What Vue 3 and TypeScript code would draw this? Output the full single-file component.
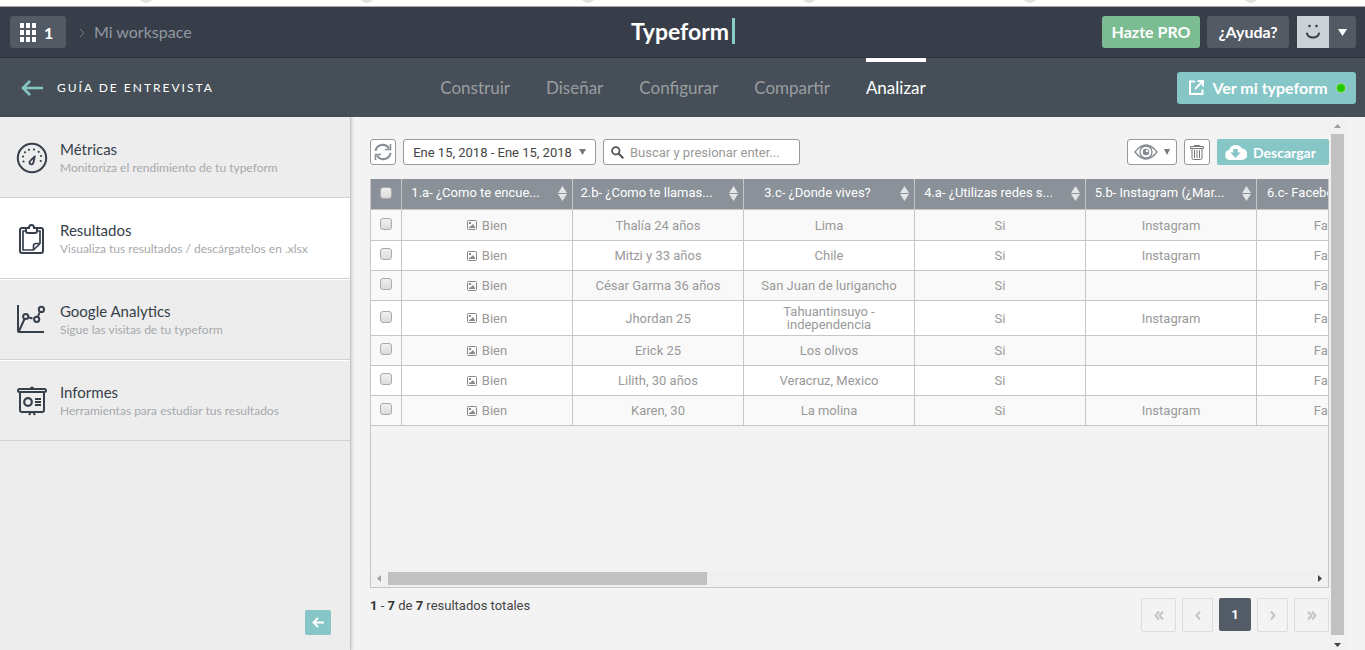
<script setup lang="ts">
import { ref } from 'vue'

interface Tab { label: string; active?: boolean }
interface SideItem { icon: string; title: string; text: string; active?: boolean }
interface Row { name: string; place: string; social: string; network: string; facebook: string }

const tabs: Tab[] = [
  { label: 'Construir' },
  { label: 'Diseñar' },
  { label: 'Configurar' },
  { label: 'Compartir' },
  { label: 'Analizar', active: true },
]

const sideItems: SideItem[] = [
  { icon: 'gauge', title: 'Métricas', text: 'Monitoriza el rendimiento de tu typeform' },
  { icon: 'clipboard', title: 'Resultados', text: 'Visualiza tus resultados / descárgatelos en .xlsx', active: true },
  { icon: 'chart', title: 'Google Analytics', text: 'Sigue las visitas de tu typeform' },
  { icon: 'board', title: 'Informes', text: 'Herramientas para estudiar tus resultados' },
]

const columns: string[] = [
  '1.a- ¿Como te encue...',
  '2.b- ¿Como te llamas...',
  '3.c- ¿Donde vives?',
  '4.a- ¿Utilizas redes s...',
  '5.b- Instagram (¿Mar...',
  '6.c- Facebook (¿Mar...',
]

const rows: Row[] = [
  { name: 'Thalía 24 años', place: 'Lima', social: 'Si', network: 'Instagram', facebook: 'Facebook' },
  { name: 'Mitzi y 33 años', place: 'Chile', social: 'Si', network: 'Instagram', facebook: 'Facebook' },
  { name: 'César Garma 36 años', place: 'San Juan de lurigancho', social: 'Si', network: '', facebook: 'Facebook' },
  { name: 'Jhordan 25', place: 'Tahuantinsuyo - independencia', social: 'Si', network: 'Instagram', facebook: 'Facebook' },
  { name: 'Erick 25', place: 'Los olivos', social: 'Si', network: '', facebook: 'Facebook' },
  { name: 'Lilith, 30 años', place: 'Veracruz, Mexico', social: 'Si', network: '', facebook: 'Facebook' },
  { name: 'Karen, 30', place: 'La molina', social: 'Si', network: 'Instagram', facebook: 'Facebook' },
]

const query = ref('')
</script>

<template>
  <div class="page">
    <div class="strip" aria-hidden="true">
      <i v-for="n in 6" :key="n"></i>
    </div>

    <header class="topbar">
      <div class="side left">
        <button class="apps" aria-label="Workspaces">
          <svg width="16" height="19" viewBox="0 0 16 19" fill="#fff">
            <path d="M0 0h4v5H0zM6 0h4v5H6zM12 0h4v5h-4zM0 7h4v5H0zM6 7h4v5H6zM12 7h4v5h-4zM0 14h4v5H0zM6 14h4v5H6zM12 14h4v5h-4z" />
          </svg>
          <b>1</b>
        </button>
        <svg class="crumb" width="6" height="10" viewBox="0 0 6 10" fill="none" stroke="#737b85"><path d="M.7.7 5 5 .7 9.3" /></svg>
        <a class="workspace" href="#">Mi workspace</a>
      </div>
      <a class="brand" href="#">Typeform<span class="cursor"></span></a>
      <div class="side right">
        <button class="btn pro">Hazte PRO</button>
        <button class="btn help">¿Ayuda?</button>
        <button class="user" aria-label="Cuenta">
          <span class="face">
            <svg width="16" height="16" viewBox="0 0 16 16">
              <circle cx="4.500" cy="2" r="1.300" fill="#383e49" /><circle cx="11.500" cy="2" r="1.300" fill="#383e49" />
              <path d="M2 9.500c1.500 5.300 10.500 5.300 12 0" fill="none" stroke="#383e49" stroke-width="2" stroke-linecap="round" />
            </svg>
          </span>
          <span class="more"><svg width="9" height="7" viewBox="0 0 9 7"><path d="M0 0h9L4.500 7z" fill="#fff" /></svg></span>
        </button>
      </div>
    </header>

    <div class="subbar">
      <div class="side left">
        <a class="back" href="#" aria-label="Volver">
          <svg width="22" height="16" viewBox="0 0 22 16" fill="none" stroke="#86c6c7" stroke-width="2.600"><path d="M22 8H2M9 1 2 8l7 7" /></svg>
        </a>
        <h1>GUÍA DE ENTREVISTA</h1>
      </div>
      <nav class="tabs">
        <a v-for="t in tabs" :key="t.label" href="#" :class="{ active: t.active }">{{ t.label }}</a>
      </nav>
      <div class="side right">
        <button class="btn view">
          <svg width="15" height="15" viewBox="0 0 15 15" fill="none" stroke="#fff" stroke-width="2"><path d="M6 1.500H1V14h12.500V9.500M8.500 1H14v5.500M14 1 6 9" /></svg>
          <span>Ver mi typeform</span>
          <i class="dot"></i>
        </button>
      </div>
    </div>

    <div class="body">
      <aside class="sidebar">
        <nav>
          <a v-for="s in sideItems" :key="s.title" href="#" class="item" :class="{ active: s.active }">
            <svg v-if="s.icon === 'gauge'" width="32" height="32" viewBox="0 0 32 32" fill="none" stroke="#363f4a">
              <circle cx="16" cy="16" r="14.200" stroke-width="2" />
              <path d="M18.800 14.500 17.300 21c-.5 2-3.800 1.700-3.900-.4-.1-1.700 2.700-3.400 5.400-6.100z" stroke-width="1.800" stroke-linejoin="round" />
              <g fill="#363f4a" stroke="none">
                <circle cx="7.500" cy="19.500" r="1.100" /><circle cx="7" cy="14.500" r="1.100" /><circle cx="9" cy="10.300" r="1.100" />
                <circle cx="13" cy="7.800" r="1.100" /><circle cx="18" cy="7.500" r="1.100" /><circle cx="22.700" cy="9.800" r="1.100" />
                <circle cx="25" cy="14" r="1.100" /><circle cx="24.700" cy="19" r="1.100" />
              </g>
            </svg>
            <svg v-else-if="s.icon === 'clipboard'" width="32" height="32" viewBox="0 0 32 32" fill="none" stroke="#363f4a" stroke-width="2">
              <path d="M9 5H6Q4 5 4 7v21q0 2 2 2h19q2 0 2-2V7q0-2-2-2h-3" />
              <path d="M9 8H7v19h10.500l6.500-6.500V8h-2M17.500 27v-4q0-2.500 2.500-2.500h4" stroke-width="1.700" />
              <path d="M10 5h3q0-3 2.500-3T18 5h3v3q0 2-2 2h-7q-2 0-2-2z" />
            </svg>
            <svg v-else-if="s.icon === 'chart'" width="32" height="32" viewBox="0 0 32 32" fill="none" stroke="#363f4a" stroke-width="2">
              <path d="M2 1v26q0 1 1 1h25M3 27l5.500-12M13 13.500l3.500 1M22 12.500l1.500-4" />
              <circle cx="9.700" cy="12.500" r="2.600" /><circle cx="20.700" cy="15.300" r="2.600" /><circle cx="25.400" cy="5.400" r="2.600" />
            </svg>
            <svg v-else width="32" height="32" viewBox="0 0 32 32" fill="none" stroke="#363f4a" stroke-width="2">
              <rect x="2" y="4" width="28" height="3" rx="1.500" />
              <path d="M4 8v17q0 2 2 2h20q2 0 2-2V8M13 30l2-3M19 30l-2-3M19 14h6M19 17h6M19 20h6" />
              <path d="M14 3.500q0-2 2-2t2 2z" fill="#363f4a" stroke="none" />
              <circle cx="12" cy="17" r="3.800" stroke-width="2.200" />
            </svg>
            <span class="copy"><strong>{{ s.title }}</strong><small>{{ s.text }}</small></span>
          </a>
        </nav>
        <button class="collapse" aria-label="Contraer">
          <svg width="12" height="11" viewBox="0 0 12 11" fill="none" stroke="#fff" stroke-width="2"><path d="M12 5.500H1.500M6 1 1.500 5.500 6 10" /></svg>
        </button>
      </aside>

      <main class="content">
        <div class="toolbar">
          <button class="tool square" aria-label="Actualizar">
            <svg width="18" height="18" viewBox="0 0 18 18" fill="none" stroke="#8a9098" stroke-width="2">
              <path d="M1.500 8C2.500 1.500 11.500-.5 15 5.500M16.500 10C15.500 16.500 6.500 18.500 3 12.500" />
              <path d="M16.500 1v5.500H11M1.500 17v-5.500H7" stroke-width="1.600" />
            </svg>
          </button>
          <button class="tool date"><span>Ene 15, 2018 - Ene 15, 2018</span>
            <svg width="7" height="6" viewBox="0 0 7 6"><path d="M0 0h7L3.500 6z" fill="#777" /></svg>
          </button>
          <label class="tool search">
            <svg width="13" height="13" viewBox="0 0 13 13" fill="none" stroke="#555"><circle cx="4.800" cy="4.800" r="3.700" stroke-width="1.800" /><path d="m7.800 7.800 4.500 4.500" stroke-width="2.200" /></svg>
            <input v-model="query" type="text" placeholder="Buscar y presionar enter..." aria-label="Buscar" />
          </label>
          <span class="spacer"></span>
          <button class="tool eye" aria-label="Columnas visibles">
            <svg width="24" height="16" viewBox="0 0 24 16" fill="none" stroke="#858b93" stroke-width="1.300">
              <path d="M1 8q11-14 22 0Q12 22 1 8z" /><circle cx="12" cy="8" r="6" /><circle cx="12" cy="8" r="3.200" fill="#858b93" stroke="none" /><circle cx="13" cy="7" r="1.200" fill="#fff" stroke="none" />
            </svg>
            <svg width="6" height="6" viewBox="0 0 6 6"><path d="M0 0h6L3 6z" fill="#777" /></svg>
          </button>
          <button class="tool square" aria-label="Eliminar">
            <svg width="14" height="16" viewBox="0 0 14 16" fill="none" stroke="#777"><path d="M4.500 2.500v-1h5v1M.5 2.500h13v2H.5zM2 4.500V14q0 1.500 1.500 1.500h7Q12 15.500 12 14V4.500M4.500 6v8M7 6v8M9.500 6v8" /></svg>
          </button>
          <button class="download">
            <svg width="22" height="16" viewBox="0 0 22 16"><path d="M5 16a5 5 0 0 1-.8-9.900A7 7 0 0 1 17 4.600 5.600 5.600 0 0 1 16.500 16z" fill="#fff" /><path d="M8.300 5h4.400v3.500h3L10.500 14 5.300 8.500h3z" fill="#86c6c7" /></svg>
            <span>Descargar</span>
          </button>
        </div>

        <section class="grid">
          <div class="clip">
            <table>
              <colgroup><col class="check" /><col v-for="c in columns" :key="c" /></colgroup>
              <thead>
                <tr>
                  <th class="pick"><input type="checkbox" aria-label="Seleccionar todo" /></th>
                  <th v-for="c in columns" :key="c">
                    <div class="head">
                      <span>{{ c }}</span>
                      <svg width="9" height="15" viewBox="0 0 9 15" fill="#e2e4e6"><path d="M4.500 0 9 7H0zM0 8h9l-4.500 7z" /></svg>
                    </div>
                  </th>
                </tr>
              </thead>
              <tbody>
                <tr v-for="r in rows" :key="r.name">
                  <td class="pick"><input type="checkbox" :aria-label="'Seleccionar ' + r.name" /></td>
                  <td>
                    <span class="choice">
                      <svg width="10" height="10" viewBox="0 0 10 10" fill="none" stroke="#888"><rect x=".5" y=".5" width="9" height="9" rx="1" /><path d="M2 8V7l2-1 2-2 2 3v1z" fill="#888" stroke="none" /><path d="M2 2h2v2H2z" fill="#888" stroke="none" /></svg>
                      Bien
                    </span>
                  </td>
                  <td>{{ r.name }}</td>
                  <td>{{ r.place }}</td>
                  <td>{{ r.social }}</td>
                  <td>{{ r.network }}</td>
                  <td>{{ r.facebook }}</td>
                </tr>
              </tbody>
            </table>
          </div>
          <div class="hbar" aria-hidden="true">
            <svg width="17" height="17" viewBox="0 0 17 17"><path d="M10 5v7L6 8.500z" fill="#a0a0a0" /></svg>
            <div class="track"><div class="thumb"></div></div>
            <svg width="17" height="17" viewBox="0 0 17 17"><path d="M7 5v7l4-3.500z" fill="#444" /></svg>
          </div>
        </section>

        <footer class="foot">
          <p><b>1</b> - <b>7</b> de <b>7</b> resultados totales</p>
          <nav class="pager">
            <button class="end" aria-label="Primera"><svg width="10" height="9" viewBox="0 0 10 9"><path d="M5 .5 1.500 4.500 5 8.500M9 .5 5.500 4.500 9 8.500" /></svg></button>
            <button aria-label="Anterior"><svg width="6" height="9" viewBox="0 0 6 9"><path d="M5 .5 1.500 4.500 5 8.500" /></svg></button>
            <button class="current">1</button>
            <button aria-label="Siguiente"><svg width="6" height="9" viewBox="0 0 6 9"><path d="M1 .5 4.500 4.500 1 8.500" /></svg></button>
            <button class="end" aria-label="Última"><svg width="10" height="9" viewBox="0 0 10 9"><path d="M1 .5 4.500 4.500 1 8.500M5 .5 8.500 4.500 5 8.500" /></svg></button>
          </nav>
        </footer>
      </main>

      <div class="vbar" aria-hidden="true">
        <svg width="17" height="17" viewBox="0 0 17 17"><path d="M5 11h7L8.500 7z" fill="#a0a0a0" /></svg>
        <div class="vthumb"></div>
        <svg width="17" height="15" viewBox="0 0 17 15"><path d="M5 8h7l-3.500 4z" fill="#444" /></svg>
      </div>
    </div>
  </div>
</template>

<style>
body { margin: 0; }
</style>

<style scoped>
* { box-sizing: border-box; }
.page {
  display: flex;
  flex-direction: column;
  height: 100vh;
  overflow: hidden;
  background: #f3f3f3;
  font-family: Lato, "Liberation Sans", sans-serif;
  color: #363f4a;
}
a { color: inherit; text-decoration: none; }
button { margin: 0; padding: 0; border: 0; font: inherit; color: inherit; background: none; cursor: pointer; }
svg { display: block; flex: none; }

.strip {
  display: flex;
  flex: none;
  gap: 207px;
  height: 7px;
  padding-left: 139px;
  overflow: hidden;
  background: #fff;
  border-bottom: 1px solid #a8a8a8;
}
.strip i { flex: none; width: 14px; height: 14px; margin-top: -11px; border-radius: 50%; background: #e2e2e2; }

.topbar, .subbar { display: flex; flex: none; align-items: center; padding: 0 9px 0 10px; }
.topbar { height: 51px; background: #383e49; border-bottom: 1px solid #2d323c; }
.subbar { height: 59px; background: #464f58; }
.side { display: flex; flex: 1; align-items: center; }
.side.right { justify-content: flex-end; }
.apps { display: flex; align-items: center; gap: 8px; width: 56px; height: 32px; padding-left: 10px; border-radius: 3px; background: #535a64; color: #fff; font-size: 16px; }
.crumb { margin: 2px 9px 0 13px; }
.workspace { color: #9199a3; font-size: 16px; line-height: 20px; }
.brand { display: flex; align-items: center; gap: 3px; padding-bottom: 2px; color: #fff; font-size: 23px; font-weight: 700; line-height: 28px; }
.cursor { width: 3px; height: 26px; background: #86cdc8; }
.btn { height: 32px; padding-bottom: 2px; border-radius: 3px; color: #fff; font-size: 16px; font-weight: 700; }
.pro { width: 98px; margin-right: 7px; background: #7cbc92; }
.help { width: 82px; margin-right: 8px; background: #535a64; }
.user { display: flex; height: 32px; border-radius: 0 3px 3px 0; overflow: hidden; }
.face, .more { display: flex; align-items: center; justify-content: center; height: 32px; }
.face { width: 32px; background: #ccd1d8; }
.more { width: 27px; background: #535a64; }

.back { margin: 0 14px 0 11px; }
h1 { margin: 0; color: #fff; font-size: 12px; font-weight: 400; line-height: 18px; letter-spacing: 2px; }
.tabs { display: flex; align-self: stretch; gap: 36px; }
.tabs a { border-top: 4px solid transparent; color: #9a9d9f; font-size: 17px; line-height: 51px; }
.tabs a.active { color: #fff; border-top-color: #fff; }
.view { display: flex; align-items: center; width: 179px; padding: 0 10px 0 12px; background: #86c6c7; }
.view span { flex: 1; text-align: center; }
.dot { width: 10px; height: 10px; border: 1px solid #9fe07f; border-radius: 50%; background: #22cc00; }

.body { display: flex; flex: 1; min-height: 0; padding-right: 19px; }
.sidebar { display: flex; flex: none; flex-direction: column; justify-content: space-between; width: 351px; background: #ededed; border-right: 1px solid #c4c4c4; box-shadow: 1px 0 3px rgba(0, 0, 0, .15); }
.item { display: flex; align-items: center; gap: 12px; height: 81px; padding-left: 16px; border-top: 1px solid #fff; border-bottom: 1px solid #d2d2d2; }
.item:first-child { border-top-color: #ededed; }
.item.active { background: #fff; }
.copy { display: flex; flex-direction: column; }
.copy strong { font-size: 15px; font-weight: 400; line-height: 20px; }
.copy small { color: #a6a9ac; font-size: 12px; line-height: 18px; }
.collapse { display: flex; align-items: center; justify-content: center; width: 26px; height: 25px; margin: 0 19px 15px auto; border-radius: 2px; background: #86c6c7; }

.content { display: flex; flex: 1; flex-direction: column; min-width: 0; padding: 22px 0 18px 19px; font-family: Roboto, "Liberation Sans", sans-serif; font-size: 13px; }
.toolbar { display: flex; flex: none; gap: 7px; height: 26px; margin-bottom: 14px; }
.tool { display: flex; align-items: center; justify-content: center; height: 26px; border: 1px solid #999; border-radius: 3px; background: #fff; }
.square { width: 26px; }
.date { gap: 7px; width: 193px; color: #444; }
.search { justify-content: flex-start; gap: 6px; width: 197px; padding-left: 7px; }
.search input { width: 100%; min-width: 0; padding: 0; border: 0; outline: 0; background: none; font: inherit; color: #444; }
.search input::placeholder { color: #999; opacity: 1; }
.spacer { flex: 1; }
.eye { gap: 6px; width: 50px; }
.download { display: flex; align-items: center; gap: 6px; width: 112px; padding-left: 8px; border-radius: 2px; background: #86c6c7; color: #fff; font-family: Lato, "Liberation Sans", sans-serif; font-size: 14px; font-weight: 700; }

.grid { display: flex; flex: 1; flex-direction: column; min-height: 0; border: 1px solid #c6c6c6; border-top: 0; }
.clip { flex: 1; min-height: 0; overflow: hidden; }
table { width: 1057px; table-layout: fixed; border-collapse: separate; border-spacing: 0; color: #999; line-height: 13px; }
col.check { width: 31px; }
th, td { height: 30px; border-right: 1px solid #c6c6c6; border-bottom: 1px solid #c6c6c6; text-align: center; }
th { height: 31px; padding: 0 5px 2px; background: #8a9199; color: #fff; font-weight: 400; }
td { padding: 0 12px; background: #fff; }
tbody tr:first-child td { height: 31px; }
tbody tr:nth-child(4) td { height: 35px; }
tbody tr:nth-child(odd) td { background: #f9f9f9; }
.pick { padding: 0; }
.pick input { display: block; appearance: none; width: 12px; height: 12px; margin: 0 auto 3px; border: 1px solid #aaa; border-radius: 3px; background: linear-gradient(#f0f0f0, #dcdcdc); }
.head { display: flex; align-items: center; gap: 14px; }
.head span { flex: 1; line-height: 18px; white-space: nowrap; }
.choice { display: flex; align-items: center; justify-content: center; gap: 5px; }

.hbar { display: flex; flex: none; height: 17px; background: #f0f0f0; }
.track { flex: 1; padding: 2px 0; }
.thumb { width: 319px; height: 13px; background: #c1c1c1; }

.foot { display: flex; flex: none; align-items: flex-start; justify-content: space-between; padding-top: 10px; color: #444; }
.foot p { margin: 0; line-height: 16px; }
.foot b { color: #333; }
.pager { display: flex; gap: 6px; }
.pager button { display: flex; align-items: center; justify-content: center; width: 31px; height: 34px; border: 1px solid #dcdcdc; border-radius: 2px; }
.pager .end { width: 35px; }
.pager .current { width: 32px; height: 33px; border: 0; background: #535c66; color: #fff; font-weight: 700; }
.pager path { fill: none; stroke: #c4c4c4; stroke-width: 2; }

.vbar { display: flex; flex: none; flex-direction: column; align-items: center; width: 17px; background: #f1f1f1; }
.vthumb { flex: 1; width: 13px; background: #c1c1c1; }
</style>
